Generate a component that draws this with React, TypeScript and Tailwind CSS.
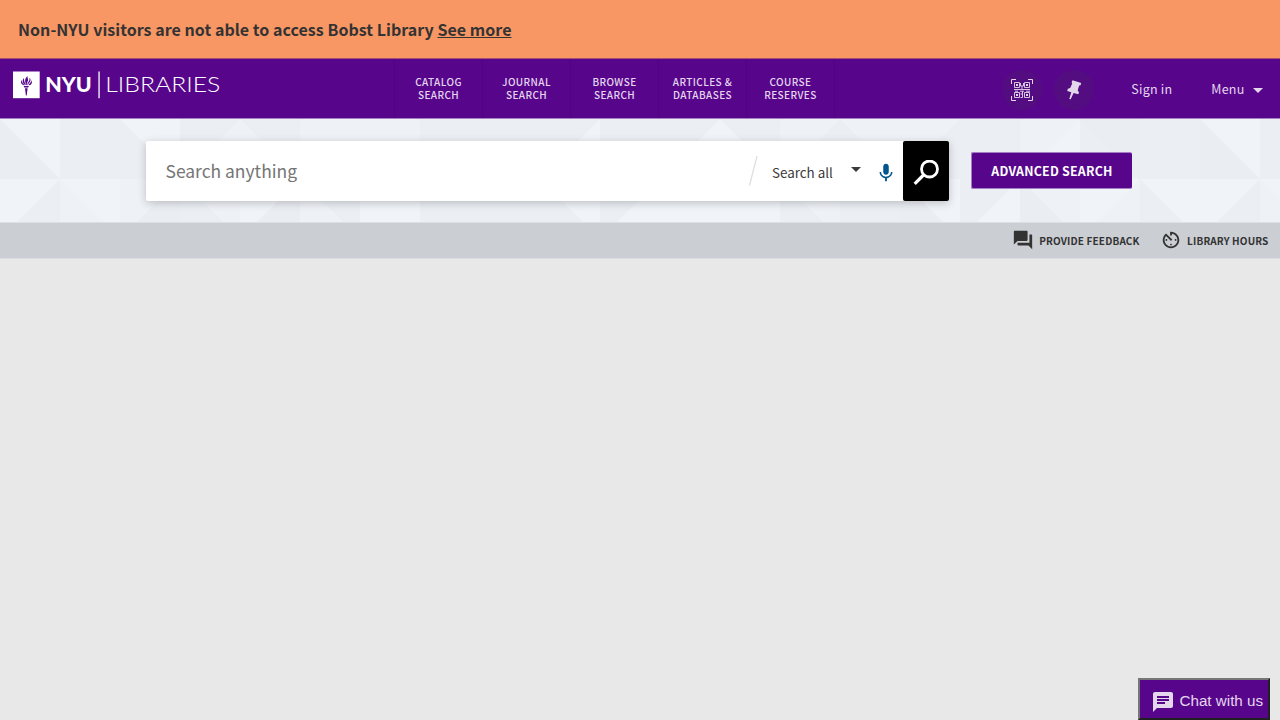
import React from 'react';

const links = [
  ['CATALOG', 'SEARCH'],
  ['JOURNAL', 'SEARCH'],
  ['BROWSE', 'SEARCH'],
  ['ARTICLES &', 'DATABASES'],
  ['COURSE', 'RESERVES'],
];

const A = '#f0f3f8';
const B = '#eef1f6';
const C = '#ebeff3';
const D = '#eaedf2';

type Tile = [dir: '\\' | '/', left: string, right: string];

// Each tile is a 60px square cut along one diagonal into a left and a right half.
const rows: Tile[][] = [
  [
    ['\\', D, A], ['/', C, C], ['\\', C, A], ['/', C, B], ['\\', B, C], ['/', B, B], ['\\', B, B],
    ['/', C, C], ['\\', C, C], ['/', C, A], ['\\', C, C], ['/', C, A], ['\\', A, C], ['/', B, C],
    ['\\', C, B], ['/', B, C], ['\\', C, C], ['/', B, A], ['\\', C, D], ['/', C, C], ['\\', D, A], ['/', C, C],
  ],
  [
    ['/', A, C], ['\\', B, A], ['/', B, D], ['\\', C, B], ['/', A, D], ['\\', B, C], ['/', A, A],
    ['\\', C, C], ['/', C, C], ['\\', C, A], ['/', C, A], ['\\', A, A], ['/', A, A], ['\\', C, B],
    ['/', C, C], ['\\', D, A], ['/', C, A], ['\\', D, B], ['/', A, B], ['\\', C, A], ['/', A, C], ['\\', B, A],
  ],
];

function Pattern() {
  return (
    <svg className="absolute inset-0 h-full w-full" shapeRendering="geometricPrecision">
      {rows.map((row, r) =>
        row.map(([dir, left, right], c) => (
          <g key={`${r}-${c}`} transform={`translate(${c * 60} ${r * 60})`}>
            <path d="M0 0H60V60H0Z" fill={left} />
            <path d={dir === '/' ? 'M60 0V60H0Z' : 'M0 0H60V60Z'} fill={right} />
          </g>
        )),
      )}
    </svg>
  );
}

function Logo() {
  return (
    <svg width="210" height="28" viewBox="0 0 210 28" className="shrink-0">
      <path fill="#fff" d="M0 0.5h26.700v26.700H0z" />
      <g fill="#57068c">
        <path d="M10.600 14.900h5.300l-.7 1.500h-3.900zM12 17.200h2.600l-.9 7.200h-.8z" />
        <path d="M11 14.200C8.300 13.600 7.200 11.200 8.600 9c.2 2 1.200 3.500 3.100 5.200zM12.100 14C9.500 12 8.800 9.300 11 7c-.1 2.500.5 4.500 1.800 7zM13.300 14c-1.600-3.500-1.800-6.600 1.300-9-.6 2 .9 3 .4 4.600-.4 1.300-1.400 2.300-1.100 4.400zM14.400 14.200c-.1-2.700 1.200-3 1.900-4.700.4-1 .3-1.800.100-2.700 1.500 1.200 1.400 2.700.600 4-.600 1-1.800 1.600-2 3.400zM15.700 14.200c.3-1.700 2.500-2.400 2.700-5 1.300 2.400.1 4.600-2.100 5z" />
      </g>
      <text x="32.300" y="20.700" fill="#fff" fontFamily="Lato" fontWeight="900" fontSize="20.500" textLength="46.500" lengthAdjust="spacingAndGlyphs">NYU</text>
      <path fill="#fff" d="M85.400 .5h1.300v26.700h-1.300z" />
      <text x="92.300" y="20.700" fill="#fff" fontFamily="Lato" fontWeight="300" fontSize="21" textLength="115" lengthAdjust="spacingAndGlyphs">LIBRARIES</text>
    </svg>
  );
}

export default function App() {
  return (
    <div className="relative flex h-[720px] w-[1280px] flex-col overflow-hidden bg-[#e8e8e8] font-['Noto_Sans_CJK_SC',sans-serif] text-[#333]">
      <div className="flex h-[58px] shrink-0 items-center bg-[#f99764] pl-[18px] text-[16px] font-bold tracking-[0.040px]">
        <span className="-mt-px whitespace-nowrap">
          Non-NYU visitors are not able to access Bobst Library <a className="underline">See more</a>
        </span>
      </div>

      <header className="flex h-[60px] shrink-0 border-t border-[#a84f78] bg-[#57068c] text-[#e4d7ec]">
        <div className="w-[394px] pt-[12px] pl-[13px]"><Logo /></div>
        <nav className="flex border-l border-[#50057f]">
          {links.map(([a, b]) => (
            <a key={a} className="flex w-[88px] flex-col items-center justify-center border-r border-[#50057f] pb-[2px] text-[10px] leading-[13px] font-medium tracking-[0.420px]">
              <span>{a}</span>
              <span>{b}</span>
            </a>
          ))}
        </nav>
        <div className="ml-auto flex items-center pt-[3px] pr-[17px]">
          <span className="mr-[12px] flex h-10 w-10 items-center justify-center rounded-full bg-[#530d80]">
            <svg width="22" height="22" viewBox="0 0 22 22" fill="none" stroke="currentColor" strokeWidth="1">
              <path d="M.5 5V.5H5M17 .5h4.500V5M.5 17v4.500H5M17 21.500h4.500V17" />
              <path strokeWidth=".9" d="M3.500 3.500h5v5h-5zM13.500 3.500h5v5h-5zM3.500 13.500h5v5h-5zM13.500 13.500h5v5h-5zM9.500 4v3h3V4M11 7v3M3 10.500h16M4 12.200h3M9 12.200h4M15 12.200h4M11.500 12v6.500H9.500M9.500 15h2" />
              <path fill="currentColor" stroke="none" d="M5 5h2v2H5zM15 5h2v2h-2zM5 15h2v2H5zM15 15h2v2h-2z" />
            </svg>
          </span>
          <span className="mr-[37.500px] flex h-10 w-10 items-center justify-center rounded-full bg-[#530d80]">
            <svg width="20" height="22" viewBox="0 0 20 22" fill="currentColor">
              <path d="M8.500 1.200 17.200 4 16.400 6.500 15.100 6.600 13.700 11.400 15 13.200 14.300 15.200 9.600 13.900 6.700 20.300 5.300 19.900 7.300 13.200 3.200 11.900 3.900 9.700 6.200 9 8.200 4.500 7.600 3.500Z" />
            </svg>
          </span>
          <span className="-mt-[2px] w-[80px] text-[12.500px] tracking-[0.220px]">Sign in</span>
          <span className="-mt-[2px] mr-[8.500px] text-[12.500px] tracking-[0.220px]">Menu</span>
          <svg width="10" height="5" viewBox="0 0 10 5" fill="currentColor" className="mt-[1px]"><path d="M0 0h10L5 5z" /></svg>
        </div>
      </header>

      <section className="relative h-[104px] shrink-0 border-t border-[#a380c1]">
        <Pattern />
        <div className="relative flex items-start pt-[22px] pl-[146px]">
          <div className="flex h-[60px] w-[803px] items-center rounded-[2px] bg-white shadow-[0_2px_8px_rgba(0,0,0,0.220)]">
            <span className="w-[602px] pl-[19.500px] text-[17.450px] text-[#757575]">Search anything</span>
            <svg width="10" height="30" viewBox="0 0 10 30" className="mr-[14px]"><path d="M1.500 29.500 9 0" stroke="#ddd" strokeWidth="1.200" /></svg>
            <span className="w-[79px] pt-[3px] text-[13.400px] text-[#3a3a3a]">Search all</span>
            <svg width="10" height="5" viewBox="0 0 10 5" className="mr-[15px] mb-[3px]"><path fill="#3a3a3a" d="M0 0h10L5 5z" /></svg>
            <svg width="22" height="22" viewBox="0 0 24 24" fill="#00558c" className="mt-[3px] -ml-[1px] mr-[6px]">
              <path d="M12 14c1.660 0 3-1.340 3-3V5c0-1.660-1.340-3-3-3S9 3.340 9 5v6c0 1.660 1.340 3 3 3zm5.300-3c0 3-2.540 5.100-5.300 5.100S6.700 14 6.700 11H5c0 3.410 2.720 6.230 6 6.720V21h2v-3.280c3.280-.480 6-3.300 6-6.720z" />
            </svg>
            <span className="ml-auto flex h-[60px] w-[46px] items-center justify-center rounded-[2px] bg-black pt-[3px]">
              <svg width="26" height="26" viewBox="0 0 26 26" fill="none" stroke="#fff" strokeWidth="2.800"><circle cx="16.500" cy="9" r="8" /><path d="m11 14.500-9.300 9.300" strokeWidth="3.200" /></svg>
            </span>
          </div>
          <button className="mt-[11px] ml-[22px] h-[37px] w-[161px] rounded-[2px] border border-r-0 border-[#a380c1] bg-[#57068c] pt-[1px] text-[12.400px] font-bold tracking-[0.220px] text-white">ADVANCED SEARCH</button>
        </div>
      </section>

      <div className="flex h-[36px] shrink-0 items-center justify-end border-t border-[#dcdfe3] bg-[#cbced3] pr-[11.500px] text-[10px] font-bold">
        <svg width="22" height="22" viewBox="0 0 24 24" fill="#333" className="mr-[5px] mb-[1px]"><path d="M21 6h-2v9H6v2c0 .550.450 1 1 1h11l4 4V7c0-.550-.450-1-1-1zm-4 6V3c0-.550-.450-1-1-1H3c-.550 0-1 .450-1 1v14l4-4h10c.550 0 1-.450 1-1z" /></svg>
        <span className="mr-[20.500px] tracking-[0.150px]">PROVIDE FEEDBACK</span>
        <svg width="22" height="22" viewBox="0 0 24 24" fill="#333" className="mr-[5px] mb-[1px]"><path d="M11 17c0 .550.450 1 1 1s1-.450 1-1-.450-1-1-1-1 .450-1 1zm0-14v4h2V5.080c3.390.490 6 3.390 6 6.920 0 3.870-3.130 7-7 7s-7-3.130-7-7c0-1.680.590-3.220 1.580-4.420L12 13l1.410-1.410-6.800-6.800v.020C4.420 6.450 3 9.050 3 12c0 4.970 4.020 9 9 9 4.970 0 9-4.030 9-9s-4.030-9-9-9h-1zm7 9c0-.550-.450-1-1-1s-1 .450-1 1 .450 1 1 1 1-.450 1-1zM6 12c0 .550.450 1 1 1s1-.450 1-1-.450-1-1-1-1 .450-1 1z" /></svg>
        <span className="tracking-[0.150px]">LIBRARY HOURS</span>
      </div>
      <div className="h-px shrink-0 bg-[#dadcdf]" />

      <button className="absolute top-[678px] left-[1138px] flex h-[42px] w-[132px] items-center border-2 border-t-[#767676] border-r-[#212121] border-b-[#212121] border-l-[#767676] bg-[#57068c] pt-[4px] pl-[10.500px] font-['Liberation_Sans',sans-serif] text-[15.200px] whitespace-nowrap text-[#e4d7ec]">
        <svg width="24" height="24" viewBox="0 0 24 24" fill="currentColor" className="mt-[2px] mr-[5px]"><path d="M20 2H4c-1.100 0-1.990.900-1.990 2L2 22l4-4h14c1.100 0 2-.900 2-2V4c0-1.100-.900-2-2-2zM6 9h12v2H6V9zm8 5H6v-2h8v2zm4-6H6V6h12v2z" /></svg>
        Chat with us
      </button>
    </div>
  );
}
